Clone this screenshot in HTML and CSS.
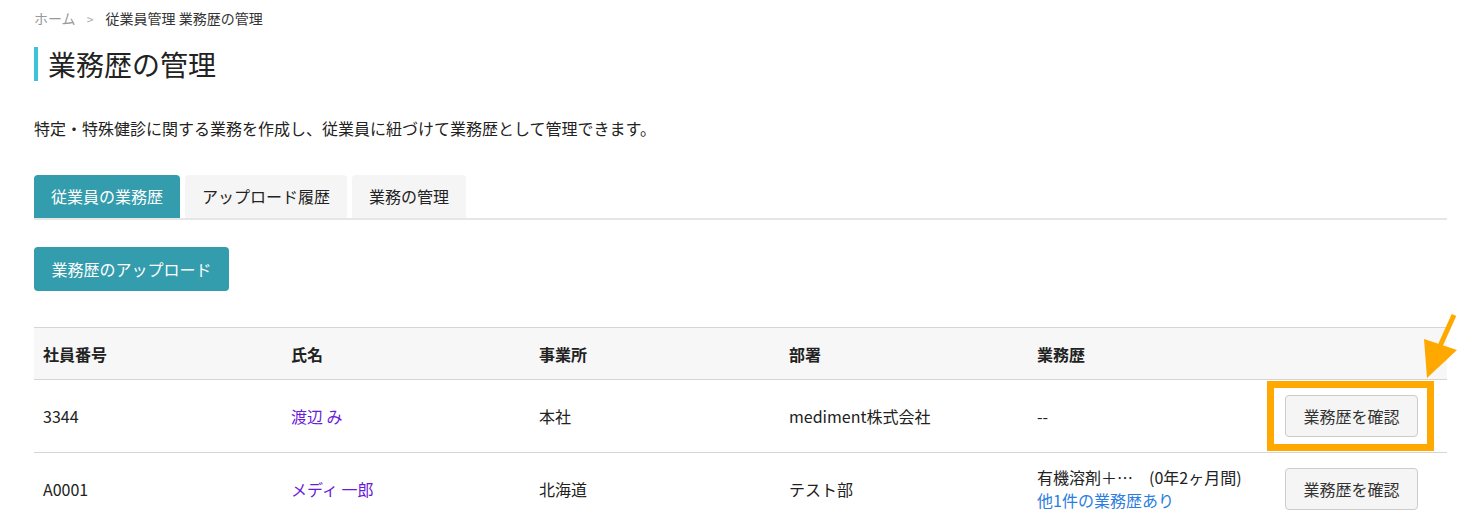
FILE: index.html
```html
<!DOCTYPE html>
<html lang="ja">
<head>
  <meta charset="UTF-8" />
  <meta name="viewport" content="width=device-width, initial-scale=1.0"/>
  <title>業務歴の管理</title>
  <link rel="stylesheet" href="styles.css">
</head>
<body>
  <nav class="breadcrumb">
    <a href="#">ホーム</a>
    <span class="sep">&gt;</span>
    <span>従業員管理 業務歴の管理</span>
  </nav>

  <h1 class="page-title">業務歴の管理</h1>

  <p class="lead">特定・特殊健診に関する業務を作成し、従業員に紐づけて業務歴として管理できます。</p>

  <ul class="tabs">
    <li class="tab active">従業員の業務歴</li>
    <li class="tab">アップロード履歴</li>
    <li class="tab">業務の管理</li>
  </ul>

  <button class="btn-primary">業務歴のアップロード</button>

  <table class="history-table">
    <colgroup>
      <col class="col-id">
      <col class="col-name">
      <col class="col-office">
      <col class="col-dept">
      <col class="col-history">
      <col>
    </colgroup>
    <thead>
      <tr>
        <th>社員番号</th>
        <th>氏名</th>
        <th>事業所</th>
        <th>部署</th>
        <th>業務歴</th>
        <th></th>
      </tr>
    </thead>
    <tbody>
      <tr>
        <td>3344</td>
        <td><a class="name" href="#">渡辺 み</a></td>
        <td>本社</td>
        <td>mediment株式会社</td>
        <td>--</td>
        <td>
          <span class="highlight">
            <button class="btn-light">業務歴を確認</button>
            <svg class="arrow" width="37" height="68" viewBox="0 0 37 68">
              <line x1="34" y1="3" x2="20" y2="34" stroke="#ffa800" stroke-width="5"/>
              <polygon points="4,27 37,38 7,66" fill="#ffa800"/>
            </svg>
          </span>
        </td>
      </tr>
      <tr>
        <td>A0001</td>
        <td><a class="name" href="#">メディ 一郎</a></td>
        <td>北海道</td>
        <td>テスト部</td>
        <td>
          有機溶剤＋…　(0年2ヶ月間)<br>
          <a class="more" href="#">他1件の業務歴あり</a>
        </td>
        <td><button class="btn-light">業務歴を確認</button></td>
      </tr>
    </tbody>
  </table>
</body>
</html>
```

FILE: styles.css
```css
body {
  font-family: "Noto Sans CJK JP", "Noto Sans", sans-serif;
  margin: 0;
  padding: 8px 10px 0 34px;
  color: #222;
  background: white;
  overflow: hidden;
}

.breadcrumb {
  font-size: 14px;
  line-height: 20px;
  color: #333;
}

.breadcrumb a {
  color: #999;
  text-decoration: none;
}

.breadcrumb .sep {
  color: #aaa;
  font-size: 12px;
  margin: 0 9px 0 8px;
}

.page-title {
  margin: 18px 0 0;
  padding-left: 10px;
  border-left: 4px solid #3cc3dc;
  font-size: 28px;
  font-weight: normal;
  line-height: 34px;
}

.lead {
  margin: 37px 0 0;
  font-size: 16px;
  line-height: 20px;
}

.tabs {
  display: flex;
  gap: 5px;
  list-style: none;
  margin: 37px 0 0;
  padding: 0;
  border-bottom: 2px solid #e6e6e6;
}

.tab {
  padding: 0 17px;
  height: 43px;
  line-height: 43px;
  font-size: 16px;
  background: #f5f5f5;
  border-radius: 4px 4px 0 0;
}

.tab.active {
  background: #339cad;
  color: white;
}

.btn-primary {
  display: block;
  margin-top: 27px;
  height: 44px;
  padding: 0 17.5px;
  border: none;
  border-radius: 4px;
  background: #339cad;
  color: white;
  font-family: inherit;
  font-size: 16px;
}

.history-table {
  width: 100%;
  margin-top: 36px;
  border-collapse: collapse;
  table-layout: fixed;
  font-size: 16px;
}

.col-id,
.col-name,
.col-dept,
.col-history {
  width: 248px;
}

.col-office {
  width: 250px;
}

.history-table th,
.history-table td {
  text-align: left;
  padding: 0 9px;
  vertical-align: middle;
}

.history-table thead tr {
  background: #f7f7f7;
  border-top: 1px solid #d5d5d5;
  border-bottom: 1px solid #d5d5d5;
  height: 52px;
}

.history-table th {
  font-size: 16px;
  font-weight: bold;
}

.history-table tbody tr {
  height: 73px;
  border-bottom: 1px solid #d5d5d5;
  line-height: 23px;
}

.name {
  color: #6a1bd9;
  text-decoration: none;
}

.more {
  color: #2b7de0;
  text-decoration: none;
}

.btn-light {
  height: 42px;
  padding: 0 17.5px;
  border: 1px solid #ccc;
  border-radius: 4px;
  background: #f5f5f5;
  color: #333;
  font-family: inherit;
  font-size: 16px;
}

.highlight {
  position: relative;
  display: inline-block;
}

.highlight::after {
  content: "";
  position: absolute;
  top: -14px;
  left: -18px;
  right: -16px;
  bottom: -14px;
  border: 7px solid #ffa800;
}

.arrow {
  position: absolute;
  left: 135px;
  top: -83px;
}
```
